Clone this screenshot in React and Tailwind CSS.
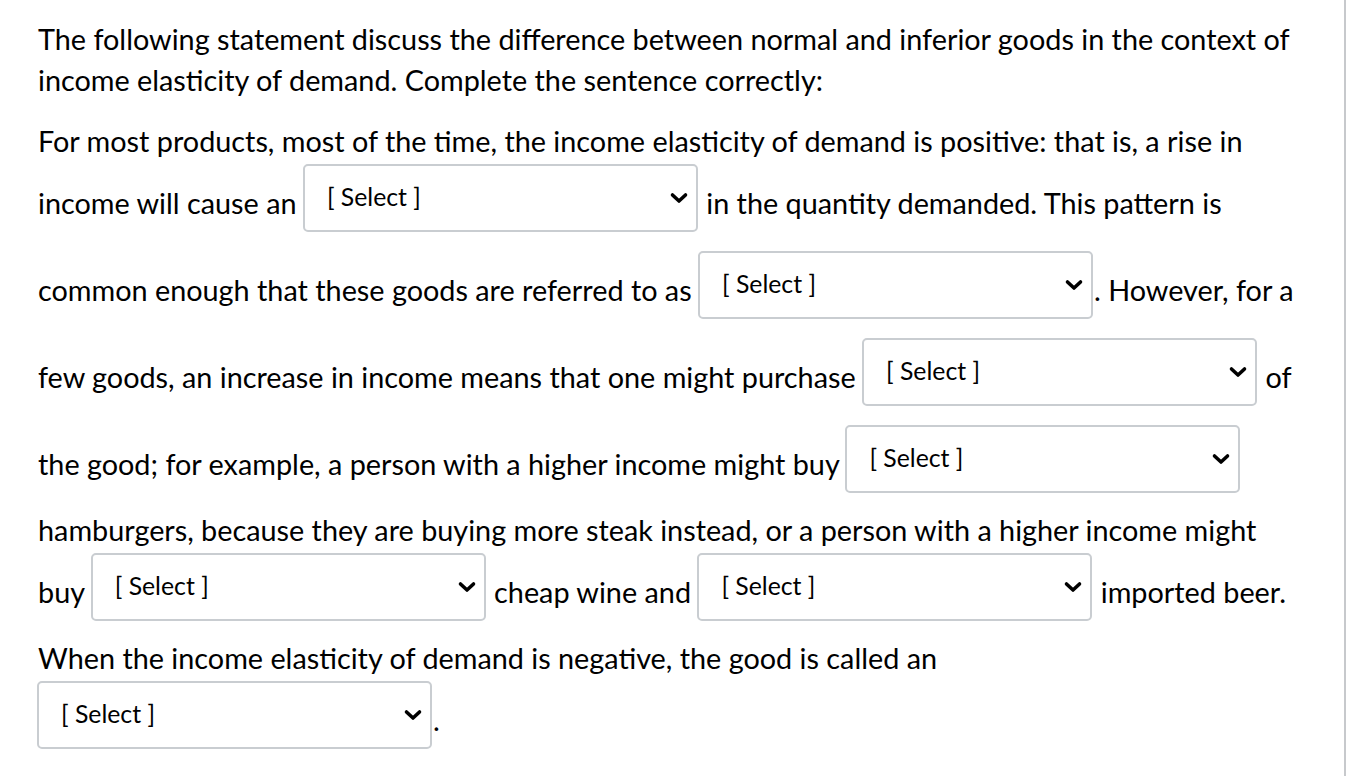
import React from "react";

function Select() {
  return (
    <span className="inline-flex items-center justify-between align-[8px] w-[395px] h-[68px] mt-[2px] mb-[17px] ml-[-1px] mr-[1px] pl-[22px] pr-[7px] pb-[2px] border-2 border-[#c9cdd1] rounded-[5px] bg-white text-[24.8px] leading-none text-black">
      <span>[ Select ]</span>
      <svg width="20" height="14" viewBox="0 0 20 14" className="mt-[2px]">
        <path d="M3.5 4 L10 10 L16.5 4" fill="none" stroke="#000" strokeWidth="3.6" strokeLinecap="round" strokeLinejoin="round" />
      </svg>
    </span>
  );
}

export default function App() {
  return (
    <div className="flex min-h-screen w-full bg-white">
      <div className="flex-1 pl-[38px] pr-[4px] pt-[19px] font-['Lato',sans-serif] text-[28.8px] leading-[41px] text-black whitespace-nowrap">
        <p>
          The following statement discuss the difference between normal and inferior goods in the context of
          <br />
          income elasticity of demand. Complete the sentence correctly:
        </p>
        <p className="mt-[20px]">
          For most products, most of the time, the income elasticity of demand is positive: that is, a rise in
          <br />
          income will cause an <Select /> in the quantity demanded. This pattern is
          <br />
          common enough that these goods are referred to as <Select />. However, for a
          <br />
          few goods, an increase in income means that one might purchase <Select /> of
          <br />
          the good; for example, a person with a higher income might buy <Select />
          <br />
          hamburgers, because they are buying more steak instead, or a person with a higher income might
          <br />
          buy <Select /> cheap wine and <Select /> imported beer.
        </p>
        <p>
          When the income elasticity of demand is negative, the good is called an
          <br />
          <Select />.
        </p>
      </div>
      <div className="w-[2px] shrink-0 bg-[#c7c9cc]" />
    </div>
  );
}
